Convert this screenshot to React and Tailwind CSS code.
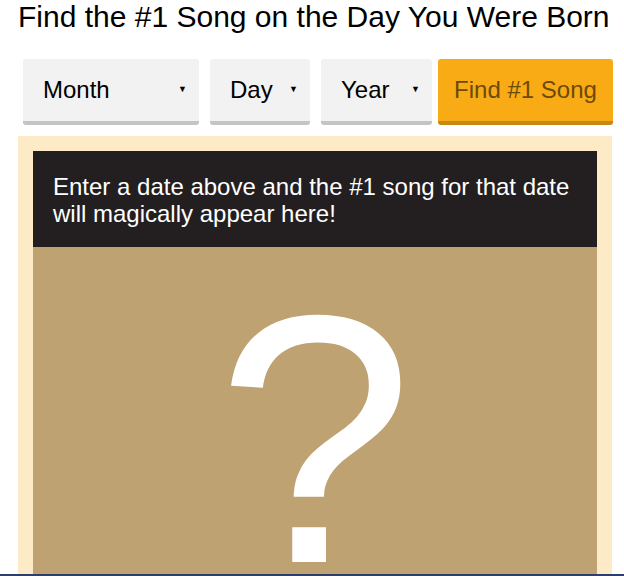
const FONT = { fontFamily: '"Liberation Sans", Arial, sans-serif' };

function FakeSelect({ label, width }) {
  return (
    <div
      className={`${width} h-[66px] flex items-center justify-between pl-5 pr-3 bg-[#f2f2f2] rounded-[3px] border-b-4 border-[#c4c4c4] text-[24px] text-black`}
    >
      <span>{label}</span>
      <span className="text-[9px]">▼</span>
    </div>
  );
}

export default function App() {
  return (
    <div className="w-[624px] h-[576px] overflow-hidden bg-white relative" style={FONT}>
      <h1 className="pl-[18px] pt-[1px] text-[30px] leading-[32px] text-black whitespace-nowrap">
        Find the #1 Song on the Day You Were Born
      </h1>

      <div className="flex items-start pl-[23px] mt-[26px]">
        <FakeSelect label="Month" width="w-[176px]" />
        <div className="w-[11px]" />
        <FakeSelect label="Day" width="w-[100px]" />
        <div className="w-[11px]" />
        <FakeSelect label="Year" width="w-[111px]" />
        <div className="w-[6px]" />
        <button className="w-[175px] h-[66px] bg-[#f9ab15] rounded-[3px] border-b-4 border-[#c68a12] text-[24px] text-[#6b4a06]">
          Find #1 Song
        </button>
      </div>

      <div className="ml-[18px] w-[594px] mt-[11px] bg-[#fdebc8] px-[15px] pt-[15px] h-[460px]">
        <div className="bg-[#231f20] text-white text-[24px] leading-[27px] pl-5 pr-4 pt-[22px] h-[96px]">
          Enter a date above and the #1 song for that date will magically appear here!
        </div>
        <div className="bg-[#bfa271] h-[400px] flex justify-center">
          <span className="text-white text-[354px] leading-[350px] mt-[18px]">?</span>
        </div>
      </div>

      <div className="fixed left-0 right-0 bottom-0 h-[2px] bg-[#2d3e6b]" />
    </div>
  );
}
